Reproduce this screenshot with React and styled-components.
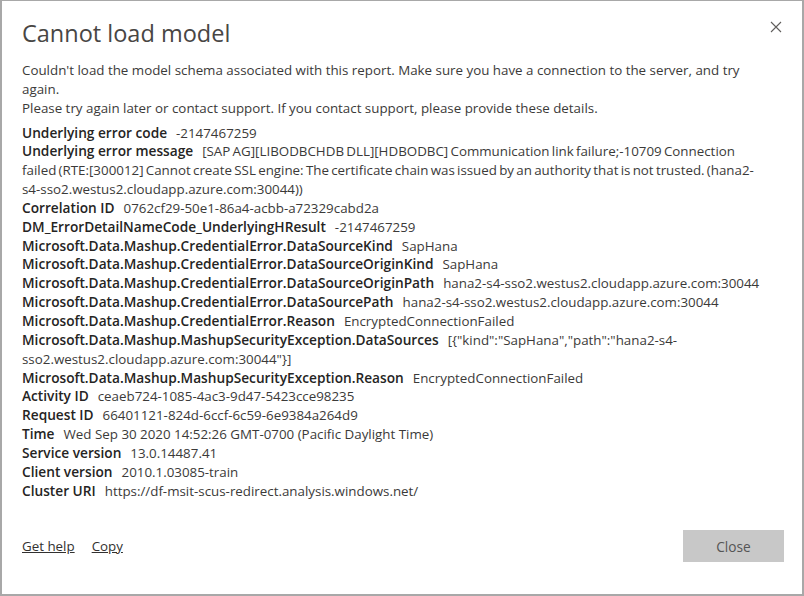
import React from 'react';
import styled, { createGlobalStyle } from 'styled-components';

const GlobalStyle = createGlobalStyle`
    html, body {
        margin: 0;
        padding: 0;
        background: #fff;
    }
    body {
        font-family: "Open Sans", "Noto Sans", "Liberation Sans", sans-serif;
    }
`;

const Frame = styled.div`
    box-sizing: border-box;
    width: 804px;
    height: 596px;
    border: 2px solid #a8a8a8;
    border-top-width: 1px;
    background: #fff;
    display: flex;
    flex-direction: column;
    padding: 15px 20px 32px 20px;
`;

const Header = styled.div`
    display: flex;
    justify-content: space-between;
    align-items: flex-start;
`;

const Title = styled.h1`
    margin: 0;
    font-size: 23.5px;
    font-weight: 400;
    color: #484644;
    line-height: 34px;
`;

const CloseIcon = styled.button`
    border: none;
    background: none;
    padding: 0;
    margin: 3px -2px 0 0;
    width: 16px;
    height: 16px;
    display: flex;
    align-items: center;
    justify-content: center;
    cursor: pointer;
`;

const Body = styled.div`
    margin: 11px 16px 0 0;
    font-size: 13.35px;
    line-height: 18.85px;
    color: #3b3a39;
`;

const Intro = styled.p`
    margin: 0 0 6px 0;
    max-width: 745px;
`;

const Entry = styled.div`
    margin: 0;
`;

const Label = styled.strong`
    font-size: 13.7px;
    font-weight: 600;
    color: #252423;
    margin-right: 9px;
`;

const Value = styled.span`
    word-spacing: ${(p) => (p.$tight ? '-1.2px' : '0')};
`;

const Footer = styled.div`
    margin-top: auto;
    display: flex;
    align-items: center;
    justify-content: space-between;
`;

const Links = styled.div`
    display: flex;
    gap: 17px;
    font-size: 13.35px;
`;

const Link = styled.a`
    color: #323130;
    text-decoration: underline;
    cursor: pointer;
`;

const Button = styled.button`
    width: 101px;
    height: 32px;
    border: none;
    background: #c8c8c8;
    color: #555;
    font-family: inherit;
    font-size: 13.7px;
    margin-right: -2px;
`;

const details = [
    ['Underlying error code', '-2147467259'],
    ['Underlying error message', '[SAP AG][LIBODBCHDB DLL][HDBODBC] Communication link failure;-10709 Connection failed (RTE:[300012] Cannot create SSL engine: The certificate chain was issued by an authority that is not trusted. (hana2-s4-sso2.westus2.cloudapp.azure.com:30044))', true],
    ['Correlation ID', '0762cf29-50e1-86a4-acbb-a72329cabd2a'],
    ['DM_ErrorDetailNameCode_UnderlyingHResult', '-2147467259'],
    ['Microsoft.Data.Mashup.CredentialError.DataSourceKind', 'SapHana'],
    ['Microsoft.Data.Mashup.CredentialError.DataSourceOriginKind', 'SapHana'],
    ['Microsoft.Data.Mashup.CredentialError.DataSourceOriginPath', 'hana2-s4-sso2.westus2.cloudapp.azure.com:30044'],
    ['Microsoft.Data.Mashup.CredentialError.DataSourcePath', 'hana2-s4-sso2.westus2.cloudapp.azure.com:30044'],
    ['Microsoft.Data.Mashup.CredentialError.Reason', 'EncryptedConnectionFailed'],
    ['Microsoft.Data.Mashup.MashupSecurityException.DataSources', '[{"kind":"SapHana","path":"hana2-s4-sso2.westus2.cloudapp.azure.com:30044"}]'],
    ['Microsoft.Data.Mashup.MashupSecurityException.Reason', 'EncryptedConnectionFailed'],
    ['Activity ID', 'ceaeb724-1085-4ac3-9d47-5423cce98235'],
    ['Request ID', '66401121-824d-6ccf-6c59-6e9384a264d9'],
    ['Time', 'Wed Sep 30 2020 14:52:26 GMT-0700 (Pacific Daylight Time)'],
    ['Service version', '13.0.14487.41'],
    ['Client version', '2010.1.03085-train'],
    ['Cluster URI', 'https://df-msit-scus-redirect.analysis.windows.net/'],
];

const App = () => {
    return (
        <>
            <GlobalStyle />
            <Frame>
                <Header>
                    <Title>Cannot load model</Title>
                    <CloseIcon aria-label="Close">
                        <svg width="12" height="12" viewBox="0 0 12 12">
                            <path d="M1 1L11 11M11 1L1 11" stroke="#605e5c" strokeWidth="1.1" fill="none" />
                        </svg>
                    </CloseIcon>
                </Header>
                <Body>
                    <Intro>
                        Couldn't load the model schema associated with this report. Make sure you have a connection to the server, and try again.
                        <br />
                        Please try again later or contact support. If you contact support, please provide these details.
                    </Intro>
                    {details.map(([label, value, tight]) => (
                        <Entry key={label}>
                            <Label>{label}</Label>
                            <Value $tight={tight}>{value}</Value>
                        </Entry>
                    ))}
                </Body>
                <Footer>
                    <Links>
                        <Link>Get help</Link>
                        <Link>Copy</Link>
                    </Links>
                    <Button>Close</Button>
                </Footer>
            </Frame>
        </>
    );
};

export default App;
